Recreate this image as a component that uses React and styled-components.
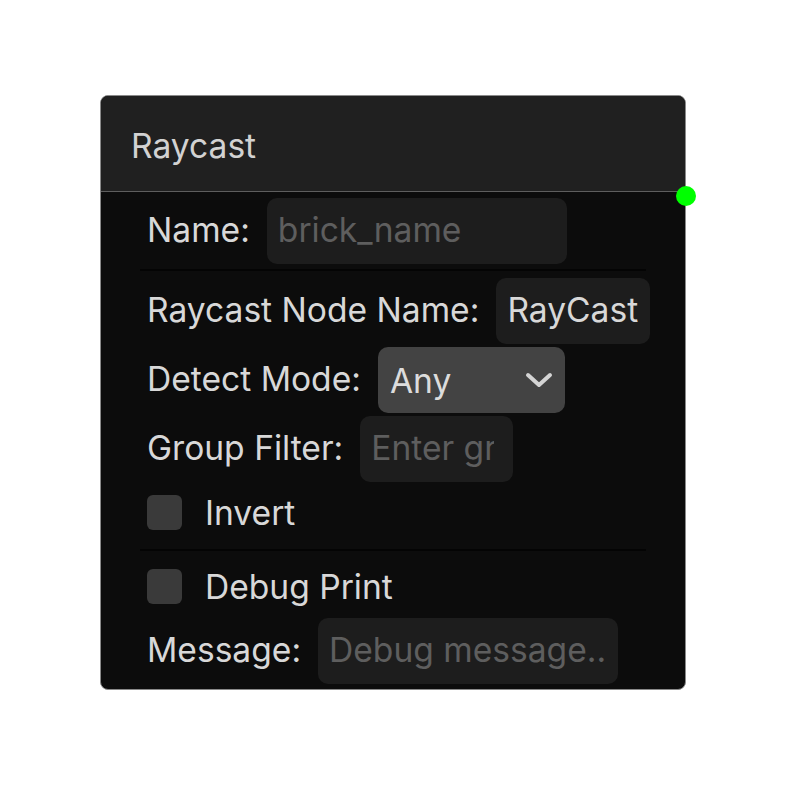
import React from "react";
import styled, { createGlobalStyle } from "styled-components";

const Global = createGlobalStyle`
  html, body { margin: 0; padding: 0; background: #ffffff; }
  body { font-family: Inter, "Noto Sans", sans-serif; }
  * { box-sizing: border-box; }
`;

const Page = styled.div`
  padding: 95px 0 0 100px;
`;

const Node = styled.div`
  position: relative;
  width: 586px;
  background: #0c0c0c;
  border: 1px solid #8a8a8a;
  border-radius: 8px;
  font-family: Inter, "Noto Sans", sans-serif;
  font-size: 33.6px;
  color: #d6d6d6;
`;

const Header = styled.div`
  height: 96px;
  display: flex;
  align-items: center;
  padding: 3px 30px 0;
  background: #202020;
  border-radius: 7px 7px 0 0;
  border-bottom: 1px solid #5e5e5e;
  color: #d2d2d2;
`;

const Port = styled.div`
  position: absolute;
  right: -11px;
  top: 90px;
  width: 20px;
  height: 20px;
  border-radius: 50%;
  background: #00ff00;
`;

const Body = styled.div`
  padding: 6px 39px 5px 39px;
  border-radius: 0 0 7px 7px;
`;

const Section = styled.div`
  display: flex;
  flex-direction: column;
  gap: ${(p) => p.$gap || 3}px;
  padding: ${(p) => p.$pt || 0}px 0 ${(p) => p.$pb || 0}px;
  border-bottom: ${(p) => (p.$divider ? "2px solid #040404" : "none")};
`;

const Row = styled.div`
  display: flex;
  align-items: center;
  gap: 17px;
  height: ${(p) => p.$h || 66}px;
  padding-left: 7px;
  white-space: nowrap;
`;

const Label = styled.span`
  color: #d8d8d8;
  flex-shrink: 0;
  padding-bottom: 3px;
`;

const Input = styled.input`
  flex-shrink: 0;
  width: ${(p) => p.$w}px;
  height: 66px;
  padding: 0 ${(p) => p.$pr || 11}px 3px 11px;
  border: none;
  outline: none;
  border-radius: 10px;
  background: #1d1d1d;
  color: #d8d8d8;
  font-family: inherit;
  font-size: 33.6px;
  &::placeholder { color: #5e5e5e; opacity: 1; }
`;

const Select = styled.div`
  flex-shrink: 0;
  width: 187px;
  height: 66px;
  display: flex;
  align-items: center;
  justify-content: space-between;
  padding: 0 12px;
  border-radius: 10px;
  background: #434343;
  color: #dcdcdc;
`;

const CheckRow = styled.label`
  display: flex;
  align-items: center;
  gap: 23px;
  height: 54px;
  padding-left: 7px;
  color: #d8d8d8;
`;

const Box = styled.span`
  width: 35px;
  height: 35px;
  border-radius: 6px;
  background: #3a3a3a;
  flex-shrink: 0;
`;

const Chevron = () => (
  <svg width="28" height="18" viewBox="0 0 28 18">
    <polyline
      points="3,4 14,14 25,4"
      fill="none"
      stroke="#d4d4d4"
      strokeWidth="4"
      strokeLinecap="round"
      strokeLinejoin="round"
    />
  </svg>
);

export default function App() {
  return (
    <Page>
      <Global />
      <Node>
        <Header>Raycast</Header>
        <Port />
        <Body>
          <Section $divider $pb={5}>
            <Row>
              <Label>Name:</Label>
              <Input $w={300} placeholder="brick_name" />
            </Row>
          </Section>
          <Section $divider $pt={7} $pb={10}>
            <Row>
              <Label>Raycast Node Name:</Label>
              <Input $w={154} defaultValue="RayCast" />
            </Row>
            <Row>
              <Label>Detect Mode:</Label>
              <Select>
                <span>Any</span>
                <Chevron />
              </Select>
            </Row>
            <Row>
              <Label>Group Filter:</Label>
              <Input $w={153} $pr={19} placeholder="Enter group name" />
            </Row>
            <CheckRow>
              <Box />
              Invert
            </CheckRow>
          </Section>
          <Section $pt={8} $gap={5}>
            <CheckRow>
              <Box />
              Debug Print
            </CheckRow>
            <Row>
              <Label>Message:</Label>
              <Input $w={300} placeholder="Debug message..." />
            </Row>
          </Section>
        </Body>
      </Node>
    </Page>
  );
}
